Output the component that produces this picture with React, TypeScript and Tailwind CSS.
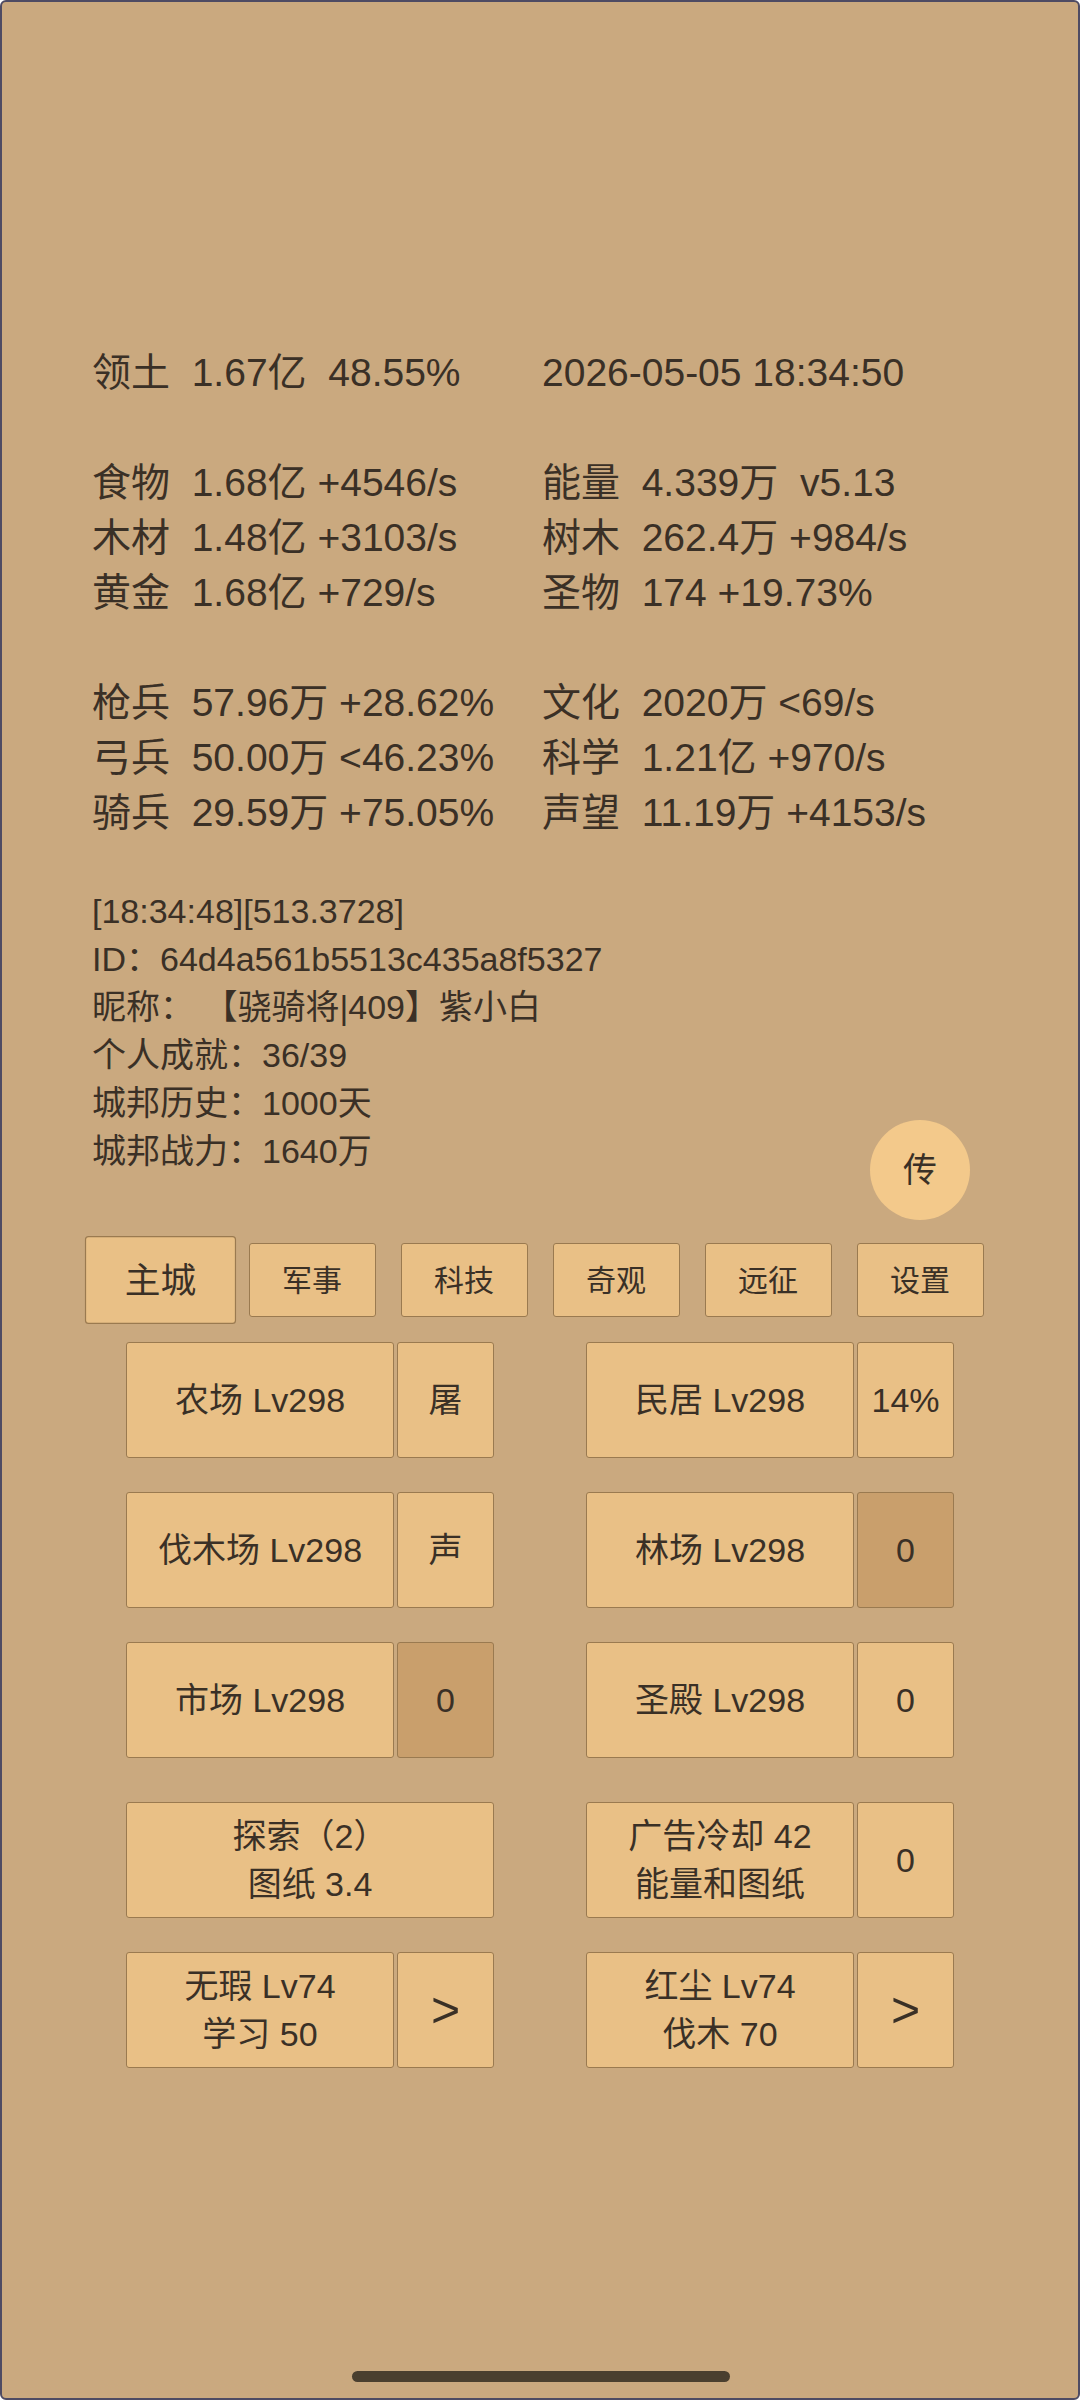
import React from "react";

const font = "font-['Liberation_Sans','Noto_Sans_CJK_SC',sans-serif]";

const stats: [string, string][] = [
  ["领土  1.67亿  48.55%", "2026-05-05 18:34:50"],
  ["", ""],
  ["食物  1.68亿 +4546/s", "能量  4.339万  v5.13"],
  ["木材  1.48亿 +3103/s", "树木  262.4万 +984/s"],
  ["黄金  1.68亿 +729/s", "圣物  174 +19.73%"],
  ["", ""],
  ["枪兵  57.96万 +28.62%", "文化  2020万 <69/s"],
  ["弓兵  50.00万 <46.23%", "科学  1.21亿 +970/s"],
  ["骑兵  29.59万 +75.05%", "声望  11.19万 +4153/s"],
];

const info = [
  "[18:34:48][513.3728]",
  "ID：64d4a561b5513c435a8f5327",
  "昵称： 【骁骑将|409】紫小白",
  "个人成就：36/39",
  "城邦历史：1000天",
  "城邦战力：1640万",
];

const tabs = ["主城", "军事", "科技", "奇观", "远征", "设置"];

type Cell = { main: string[]; side?: string; dark?: boolean; big?: boolean };

const rows: { left: Cell; right: Cell; gap: string }[] = [
  { left: { main: ["农场 Lv298"], side: "屠" }, right: { main: ["民居 Lv298"], side: "14%" }, gap: "mt-[25px]" },
  { left: { main: ["伐木场 Lv298"], side: "声" }, right: { main: ["林场 Lv298"], side: "0", dark: true }, gap: "mt-[34px]" },
  { left: { main: ["市场 Lv298"], side: "0", dark: true }, right: { main: ["圣殿 Lv298"], side: "0" }, gap: "mt-[34px]" },
  { left: { main: ["探索（2）", "图纸 3.4"] }, right: { main: ["广告冷却 42", "能量和图纸"], side: "0" }, gap: "mt-[44px]" },
  { left: { main: ["无瑕 Lv74", "学习 50"], side: ">", big: true }, right: { main: ["红尘 Lv74", "伐木 70"], side: ">", big: true }, gap: "mt-[34px]" },
];

const btn = "flex flex-col items-center justify-center rounded-[3px] border border-[#9a7a50] text-[#3a3026]";

function Group({ cell }: { cell: Cell }) {
  return (
    <div className="flex w-[368px] gap-[3px]">
      <div className={`${btn} h-[116px] flex-1 bg-[#e9c086] text-[34px] leading-[48px]`}>
        {cell.main.map((l) => (
          <span key={l} className="whitespace-pre">{l}</span>
        ))}
      </div>
      {cell.side && (
        <div
          className={`${btn} h-[116px] w-[97px] ${cell.dark ? "bg-[#c99f6c] border-[#8a6a42]" : "bg-[#e9c086]"} ${cell.big ? "text-[50px]" : "text-[34px]"}`}
        >
          {cell.side}
        </div>
      )}
    </div>
  );
}

export default function App() {
  return (
    <div className={`${font} relative h-[2400px] w-[1080px] overflow-hidden rounded-[6px] border-2 border-[#4e4b63] bg-[#caa97f] text-[#3a3026]`}>
      {/* stats */}
      <div className="mt-[343px] flex flex-col">
        {stats.map(([l, r], i) => (
          <div key={i} className="flex h-[55px] items-center text-[39px] leading-[55px]">
            <span className="w-[540px] shrink-0 whitespace-pre pl-[90px]">{l}</span>
            <span className="whitespace-pre">{r}</span>
          </div>
        ))}
      </div>

      {/* info */}
      <div className="mt-[47px] flex flex-col pl-[90px] text-[34px] leading-[48px]">
        {info.map((t) => (
          <span key={t} className="whitespace-pre">{t}</span>
        ))}
      </div>

      <div className="absolute left-[868px] top-[1118px] flex h-[100px] w-[100px] items-center justify-center rounded-full bg-[#f3c98b] text-[34px]">
        传
      </div>

      {/* tabs */}
      <div className="mt-[68px] flex items-center justify-center gap-[25px]">
        {tabs.map((t, i) => (
          <div
            key={t}
            className={`${btn} h-[74px] w-[127px] bg-[#e9c086] text-[30px] ${i === 0 ? "scale-[1.19] border-[#8a6a42]" : ""}`}
          >
            {t}
          </div>
        ))}
      </div>

      {/* buildings */}
      {rows.map((r, i) => (
        <div key={i} className={`${r.gap} flex justify-center gap-[92px]`}>
          <Group cell={r.left} />
          <Group cell={r.right} />
        </div>
      ))}

      <div className="absolute bottom-[16px] left-[350px] h-[11px] w-[378px] rounded-full bg-[#4a3f2f]" />
    </div>
  );
}
